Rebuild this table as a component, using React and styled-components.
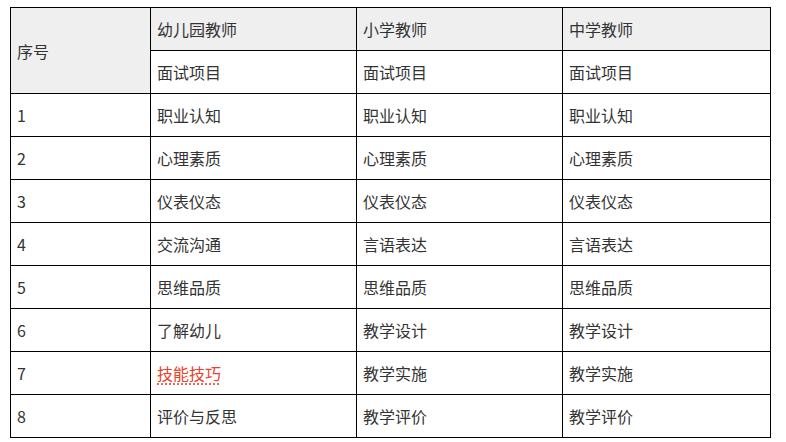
import React from "react";
import styled, { createGlobalStyle } from "styled-components";

const GlobalStyle = createGlobalStyle`
  body {
    margin: 0;
    background: #fff;
    font-family: "Microsoft YaHei", "Noto Sans CJK SC", "Noto Sans", sans-serif;
  }
`;

const Page = styled.div`
  padding: 7px 0 0 10px;
`;

const Table = styled.table`
  border-collapse: collapse;
  table-layout: fixed;
  width: 760px;
  color: #333;
  font-size: 16px;
`;

const Cell = styled.td`
  border: 1px solid #000;
  height: 43px;
  padding: 0 0 0 6px;
  box-sizing: border-box;
  background: ${(p) => (p.$head ? "#efefef" : "#fff")};
  vertical-align: middle;
  line-height: 20px;
`;

const Marked = styled.span`
  color: #e8432c;
  text-decoration: underline dotted #e8432c;
  text-underline-offset: 4px;
`;

const rows = [
  ["1", "职业认知", "职业认知", "职业认知"],
  ["2", "心理素质", "心理素质", "心理素质"],
  ["3", "仪表仪态", "仪表仪态", "仪表仪态"],
  ["4", "交流沟通", "言语表达", "言语表达"],
  ["5", "思维品质", "思维品质", "思维品质"],
  ["6", "了解幼儿", "教学设计", "教学设计"],
  ["7", "技能技巧", "教学实施", "教学实施"],
  ["8", "评价与反思", "教学评价", "教学评价"],
];

export default function App() {
  return (
    <Page>
      <GlobalStyle />
      <Table>
        <colgroup>
          <col style={{ width: 140 }} />
          <col style={{ width: 206 }} />
          <col style={{ width: 206 }} />
          <col style={{ width: 208 }} />
        </colgroup>
        <tbody>
          <tr>
            <Cell $head rowSpan={2}>序号</Cell>
            <Cell $head>幼儿园教师</Cell>
            <Cell $head>小学教师</Cell>
            <Cell $head>中学教师</Cell>
          </tr>
          <tr>
            <Cell>面试项目</Cell>
            <Cell>面试项目</Cell>
            <Cell>面试项目</Cell>
          </tr>
          {rows.map((r) => (
            <tr key={r[0]}>
              <Cell>{r[0]}</Cell>
              <Cell>{r[1] === "技能技巧" ? <Marked>{r[1]}</Marked> : r[1]}</Cell>
              <Cell>{r[2]}</Cell>
              <Cell>{r[3]}</Cell>
            </tr>
          ))}
        </tbody>
      </Table>
    </Page>
  );
}
